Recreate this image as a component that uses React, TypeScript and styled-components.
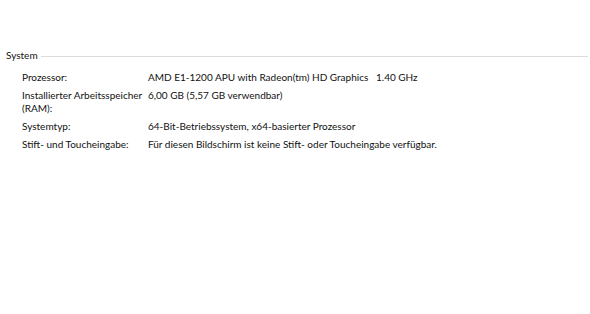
import { Fragment } from 'react'
import styled, { createGlobalStyle } from 'styled-components'

const GlobalStyle = createGlobalStyle`
  html, body {
    margin: 0;
    padding: 0;
    background: #ffffff;
  }
  body {
    font-family: Lato, 'Open Sans', 'Liberation Sans', sans-serif;
    font-size: 10px;
    color: #111111;
  }
`

const Page = styled.div`
  width: 590px;
  height: 314px;
  padding-top: 49px;
  box-sizing: border-box;
`

const Group = styled.section`
  display: flex;
  flex-direction: column;
`

const GroupHeader = styled.div`
  display: flex;
  align-items: center;
  gap: 3px;
  padding-left: 6px;
  height: 13px;
  line-height: 13px;
`

const GroupTitle = styled.span`
  white-space: nowrap;
`

const Rule = styled.div`
  flex: 1;
  height: 1px;
  background: #dcdcdc;
  margin-right: 2px;
  margin-top: 2px;
`

const Rows = styled.div`
  display: grid;
  grid-template-columns: 126px 1fr;
  row-gap: 5px;
  padding: 9px 0 0 22px;
`

const Label = styled.div`
  line-height: 13px;
  padding-right: 2px;
`

const Value = styled.div`
  line-height: 13px;
  white-space: pre;
`

const specs: [string, string][] = [
  ['Prozessor:', 'AMD E1-1200 APU with Radeon(tm) HD Graphics   1.40 GHz'],
  ['Installierter Arbeitsspeicher (RAM):', '6,00 GB (5,57 GB verwendbar)'],
  ['Systemtyp:', '64-Bit-Betriebssystem, x64-basierter Prozessor'],
  ['Stift- und Toucheingabe:', 'Für diesen Bildschirm ist keine Stift- oder Toucheingabe verfügbar.'],
]

export default function App() {
  return (
    <>
      <GlobalStyle />
      <Page>
        <Group>
          <GroupHeader>
            <GroupTitle>System</GroupTitle>
            <Rule />
          </GroupHeader>
          <Rows>
            {specs.map(([label, value]) => (
              <Fragment key={label}>
                <Label>{label}</Label>
                <Value>{value}</Value>
              </Fragment>
            ))}
          </Rows>
        </Group>
      </Page>
    </>
  )
}
